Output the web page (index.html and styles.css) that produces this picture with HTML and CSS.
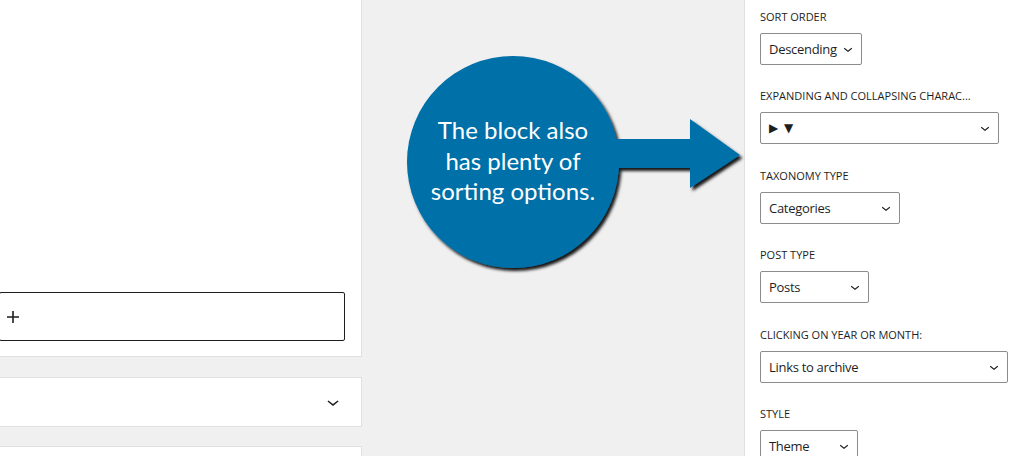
FILE: index.html
```html
<!DOCTYPE html>
<html lang="en">
<head>
<meta charset="utf-8">
<title>Archive block settings</title>
<link rel="stylesheet" href="styles.css">
</head>
<body>
<div class="app">
  <main class="editor">
    <div class="column">
      <section class="panel panel-main">
        <div class="appender">
          <svg class="plus" viewBox="0 0 24 24" width="24" height="24"><path d="M18 11.2h-5.2V6h-1.6v5.2H6v1.6h5.2V18h1.6v-5.2H18z"/></svg>
        </div>
      </section>
      <section class="panel panel-toggle">
        <svg class="chev" viewBox="0 0 24 24" width="24" height="24"><path d="M17.5 11.6L12 16l-5.5-4.4.9-1.2L12 14l4.6-3.6 1 1.2z"/></svg>
      </section>
      <section class="panel panel-next"></section>
    </div>
    <div class="callout">
      <svg class="callout-shape" viewBox="0 0 350 230" width="350" height="230">
        <defs>
          <filter id="sh" x="-10%" y="-10%" width="130%" height="130%">
            <feDropShadow dx="2.5" dy="3" stdDeviation="1.6" flood-color="#000" flood-opacity="0.9"/>
          </filter>
        </defs>
        <g filter="url(#sh)" fill="#0070a8">
          <circle cx="113" cy="112" r="106"/>
          <rect x="200" y="89" width="92" height="29"/>
          <polygon points="290,69 340,105 290,138"/>
        </g>
      </svg>
      <p class="callout-text">The block also<br>has plenty of<br>sorting options.</p>
    </div>
  </main>
  <aside class="sidebar">
    <div class="field">
      <div class="label">Sort order</div>
      <div class="select w-desc"><span>Descending</span><svg class="sel-chev" viewBox="0 0 24 24" width="18" height="18"><path d="M17.5 11.6L12 16l-5.5-4.4.9-1.2L12 14l4.6-3.6 1 1.2z"/></svg></div>
    </div>
    <div class="field">
      <div class="label">Expanding and collapsing charac...</div>
      <div class="select w-exp"><span class="glyphs">▶ ▼</span><svg class="sel-chev" viewBox="0 0 24 24" width="18" height="18"><path d="M17.5 11.6L12 16l-5.5-4.4.9-1.2L12 14l4.6-3.6 1 1.2z"/></svg></div>
    </div>
    <div class="field">
      <div class="label">Taxonomy type</div>
      <div class="select w-tax"><span>Categories</span><svg class="sel-chev" viewBox="0 0 24 24" width="18" height="18"><path d="M17.5 11.6L12 16l-5.5-4.4.9-1.2L12 14l4.6-3.6 1 1.2z"/></svg></div>
    </div>
    <div class="field">
      <div class="label">Post type</div>
      <div class="select w-post"><span>Posts</span><svg class="sel-chev" viewBox="0 0 24 24" width="18" height="18"><path d="M17.5 11.6L12 16l-5.5-4.4.9-1.2L12 14l4.6-3.6 1 1.2z"/></svg></div>
    </div>
    <div class="field">
      <div class="label">Clicking on year or month:</div>
      <div class="select w-click"><span>Links to archive</span><svg class="sel-chev" viewBox="0 0 24 24" width="18" height="18"><path d="M17.5 11.6L12 16l-5.5-4.4.9-1.2L12 14l4.6-3.6 1 1.2z"/></svg></div>
    </div>
    <div class="field">
      <div class="label">Style</div>
      <div class="select w-style"><span>Theme</span><svg class="sel-chev" viewBox="0 0 24 24" width="18" height="18"><path d="M17.5 11.6L12 16l-5.5-4.4.9-1.2L12 14l4.6-3.6 1 1.2z"/></svg></div>
    </div>
  </aside>
</div>
</body>
</html>
```

FILE: styles.css
```css
* { box-sizing: border-box; }
html, body { margin: 0; padding: 0; }
body {
  font-family: "Open Sans", "Noto Sans", sans-serif;
  color: #1e1e1e;
  background: #f0f0f0;
}
.app {
  display: flex;
  width: 1024px;
  height: 456px;
  overflow: hidden;
}
.editor {
  position: relative;
  flex: 0 0 744px;
  background: #f0f0f0;
}
.column {
  display: flex;
  flex-direction: column;
  width: 362px;
}
.panel {
  background: #fff;
  border: 1px solid #e0e0e0;
  border-left: none;
}
.panel-main {
  height: 357px;
  border-top: none;
  display: flex;
  flex-direction: column;
  justify-content: flex-end;
  padding-bottom: 15px;
}
.appender {
  margin-left: -1px;
  width: 346px;
  height: 49px;
  border: 1px solid #1e1e1e;
  border-radius: 2px;
  display: flex;
  align-items: center;
  padding-left: 1px;
}
.plus { fill: #1e1e1e; display: block; }
.panel-toggle {
  margin-top: 20px;
  height: 50px;
  display: flex;
  align-items: center;
  justify-content: flex-end;
  padding-right: 16px;
}
.chev { fill: #1e1e1e; display: block; }
.panel-next {
  margin-top: 19px;
  height: 60px;
}
.callout {
  position: absolute;
  left: 400px;
  top: 50px;
  width: 350px;
  height: 230px;
}
.callout-shape { display: block; }
.callout-text {
  position: absolute;
  left: 13px;
  top: 65px;
  width: 200px;
  margin: 0;
  text-align: center;
  color: #fff;
  font-family: "Lato", "Open Sans", sans-serif;
  font-size: 24px;
  line-height: 30.5px;
}
.sidebar {
  flex: 1;
  background: #fff;
  border-left: 1px solid #e0e0e0;
  padding: 9px 0 0 15px;
}
.field { margin-bottom: 23.4px; }
.label {
  font-size: 11px;
  font-weight: 500;
  line-height: 16px;
  text-transform: uppercase;
  margin-bottom: 8px;
  white-space: nowrap;
}
.select {
  height: 32px;
  border: 1px solid #8c8c8c;
  border-radius: 2px;
  display: flex;
  align-items: center;
  justify-content: space-between;
  padding: 0 4px 0 8px;
  font-size: 13px;
  letter-spacing: -0.3px;
}
.sel-chev { fill: #1e1e1e; display: block; flex: none; }
.glyphs {
  font-family: "DejaVu Sans", sans-serif;
  font-size: 12px;
  letter-spacing: 1px;
}
.w-desc { width: 102px; }
.w-exp { width: 239px; }
.w-tax { width: 140px; }
.w-post { width: 109px; }
.w-click { width: 248px; }
.w-style { width: 98px; }
```
